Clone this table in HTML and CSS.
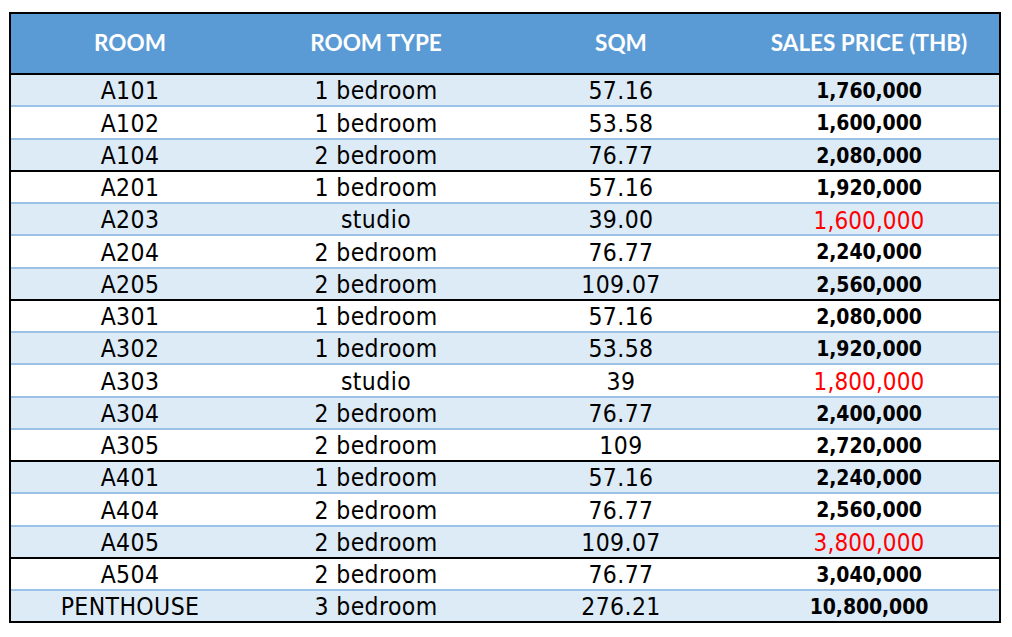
FILE: index.html
```html
<!DOCTYPE html>
<html lang="en">
<head>
<meta charset="utf-8">
<title>Room price list</title>
<link rel="stylesheet" href="styles.css">
</head>
<body>
<div class="sheet">
  <div class="row head">
    <div class="cell">ROOM</div>
    <div class="cell">ROOM TYPE</div>
    <div class="cell">SQM</div>
    <div class="cell">SALES PRICE (THB)</div>
  </div>
  <div class="row alt"><div class="cell">A101</div><div class="cell">1 bedroom</div><div class="cell">57.16</div><div class="cell price">1,760,000</div></div>
  <div class="row"><div class="cell">A102</div><div class="cell">1 bedroom</div><div class="cell">53.58</div><div class="cell price">1,600,000</div></div>
  <div class="row alt floor"><div class="cell">A104</div><div class="cell">2 bedroom</div><div class="cell">76.77</div><div class="cell price">2,080,000</div></div>
  <div class="row"><div class="cell">A201</div><div class="cell">1 bedroom</div><div class="cell">57.16</div><div class="cell price">1,920,000</div></div>
  <div class="row alt"><div class="cell">A203</div><div class="cell">studio</div><div class="cell">39.00</div><div class="cell price red">1,600,000</div></div>
  <div class="row"><div class="cell">A204</div><div class="cell">2 bedroom</div><div class="cell">76.77</div><div class="cell price">2,240,000</div></div>
  <div class="row alt floor"><div class="cell">A205</div><div class="cell">2 bedroom</div><div class="cell">109.07</div><div class="cell price">2,560,000</div></div>
  <div class="row"><div class="cell">A301</div><div class="cell">1 bedroom</div><div class="cell">57.16</div><div class="cell price">2,080,000</div></div>
  <div class="row alt"><div class="cell">A302</div><div class="cell">1 bedroom</div><div class="cell">53.58</div><div class="cell price">1,920,000</div></div>
  <div class="row"><div class="cell">A303</div><div class="cell">studio</div><div class="cell">39</div><div class="cell price red">1,800,000</div></div>
  <div class="row alt"><div class="cell">A304</div><div class="cell">2 bedroom</div><div class="cell">76.77</div><div class="cell price">2,400,000</div></div>
  <div class="row floor"><div class="cell">A305</div><div class="cell">2 bedroom</div><div class="cell">109</div><div class="cell price">2,720,000</div></div>
  <div class="row alt"><div class="cell">A401</div><div class="cell">1 bedroom</div><div class="cell">57.16</div><div class="cell price">2,240,000</div></div>
  <div class="row"><div class="cell">A404</div><div class="cell">2 bedroom</div><div class="cell">76.77</div><div class="cell price">2,560,000</div></div>
  <div class="row alt floor"><div class="cell">A405</div><div class="cell">2 bedroom</div><div class="cell">109.07</div><div class="cell price red">3,800,000</div></div>
  <div class="row"><div class="cell">A504</div><div class="cell">2 bedroom</div><div class="cell">76.77</div><div class="cell price">3,040,000</div></div>
  <div class="row alt last"><div class="cell">PENTHOUSE</div><div class="cell">3 bedroom</div><div class="cell">276.21</div><div class="cell price">10,800,000</div></div>
</div>
</body>
</html>
```
FILE: styles.css
```css
html, body {
  margin: 0;
  padding: 0;
  background: #ffffff;
}
body {
  padding: 12px 0 0 9px;
}
.sheet {
  width: 992px;
  box-sizing: border-box;
  border: 2px solid #000000;
  font-family: "DejaVu Sans Condensed", "DejaVu Sans", sans-serif;
  font-stretch: condensed;
  font-size: 24.5px;
  letter-spacing: 0.4px;
  color: #000000;
}
.row {
  display: grid;
  grid-template-columns: 238px 254px 236px 260px;
  height: 32.25px;
  box-sizing: border-box;
  border-bottom: 2px solid #9bc2e6;
  background: #ffffff;
}
.row.alt {
  background: #ddebf7;
}
.row.floor {
  border-bottom-color: #000000;
}
.row.last {
  border-bottom: none;
  height: 30.25px;
}
.cell {
  display: flex;
  align-items: center;
  justify-content: center;
  white-space: nowrap;
  line-height: 1;
  padding-top: 3px;
}
.row.head {
  height: 61px;
  background: #5b9bd5;
  border-bottom: 2px solid #000000;
  color: #ffffff;
  font-family: Lato, "Open Sans", sans-serif;
  font-stretch: normal;
  font-weight: 700;
  font-size: 22.5px;
  letter-spacing: 0;
}
.row.head .cell {
  padding-top: 0;
}
.price {
  font-weight: 700;
  font-size: 21px;
  letter-spacing: -0.1px;
}
.price.red {
  font-weight: 400;
  font-size: 24px;
  letter-spacing: 0.1px;
  color: #ff0000;
}
```
